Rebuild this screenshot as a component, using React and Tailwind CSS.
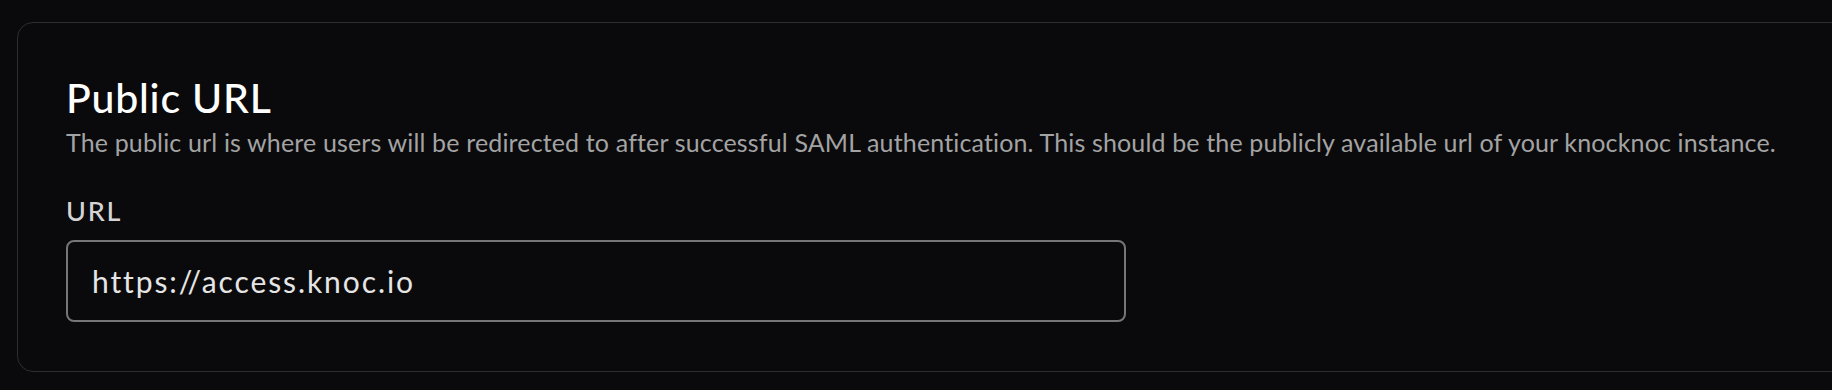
import React, { useState } from "react";

const App = () => {
  const [url, setUrl] = useState("https://access.knoc.io");

  return (
    <div
      className="min-h-[390px] w-full overflow-hidden bg-[#0a0a0c] pt-[22px] pl-[17px]"
      style={{ fontFamily: "Lato, 'Noto Sans', sans-serif" }}
    >
      <div className="w-[1860px] rounded-2xl border border-[#2e2e31] pl-[48px] pt-[54px] pb-[49px]">
        <h2 className="text-[41px] leading-[41px] font-medium tracking-[0.8px] text-white">Public URL</h2>
        <p className="mt-[9px] text-[25px] leading-[30px] tracking-[0.15px] text-[#a3a3a3]">
          The public url is where users will be redirected to after successful SAML authentication. This should be the publicly available url of your knocknoc instance.
        </p>
        <label htmlFor="public-url" className="mt-[38px] block text-[27px] leading-[32px] font-medium tracking-[1.8px] text-[#d4d4d4]">
          URL
        </label>
        <input
          id="public-url"
          type="text"
          value={url}
          onChange={(e) => setUrl(e.target.value)}
          className="mt-[13px] block h-[82px] w-[1060px] rounded-lg border-2 border-[#767678] bg-transparent px-6 text-[30px] tracking-[1.9px] text-[#e5e5e5] outline-none"
        />
      </div>
    </div>
  );
};

export default App;
